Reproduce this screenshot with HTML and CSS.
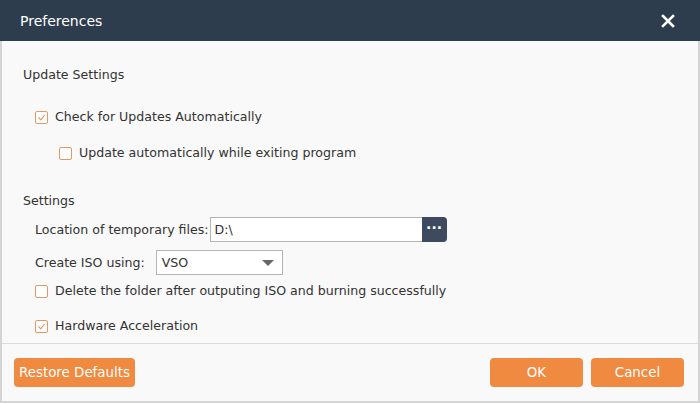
FILE: index.html
```html
<!DOCTYPE html>
<html lang="en">
<head>
<meta charset="UTF-8">
<title>Preferences</title>
<link rel="stylesheet" href="styles.css">
</head>
<body>
<div class="dialog">
    <div class="titlebar">
        <span class="title">Preferences</span>
        <span class="close">
            <svg width="14" height="14" viewBox="0 0 14 14"><path d="M2 2L12 12M12 2L2 12" stroke="#fff" stroke-width="2.6" stroke-linecap="square"/></svg>
        </span>
    </div>
    <div class="content">
        <div class="section-title">Update Settings</div>
        <label class="check row-auto">
            <span class="box checked"><svg width="11" height="11" viewBox="0 0 11 11"><path d="M2.5 5.5L4.8 7.8L8.6 3" fill="none" stroke="#e8955a" stroke-width="1.1"/></svg></span>
            Check for Updates Automatically
        </label>
        <label class="check row-exit">
            <span class="box"></span>
            Update automatically while exiting program
        </label>

        <div class="section-title second">Settings</div>
        <div class="field row-location">
            <span class="label">Location of temporary files:</span>
            <div class="path-input">
                <span class="path-text">D:\</span>
                <span class="browse">···</span>
            </div>
        </div>
        <div class="field row-iso">
            <span class="label">Create ISO using:</span>
            <div class="select">
                <span>VSO</span>
                <svg width="12" height="6" viewBox="0 0 12 6"><path d="M0 0H12L6 6Z" fill="#666"/></svg>
            </div>
        </div>
        <label class="check row-delete">
            <span class="box"></span>
            Delete the folder after outputing ISO and burning successfully
        </label>
        <label class="check row-hw">
            <span class="box checked"><svg width="11" height="11" viewBox="0 0 11 11"><path d="M2.5 5.5L4.8 7.8L8.6 3" fill="none" stroke="#e8955a" stroke-width="1.1"/></svg></span>
            Hardware Acceleration
        </label>
    </div>
    <div class="footer">
        <button class="btn restore">Restore Defaults</button>
        <div class="right-buttons">
            <button class="btn ok">OK</button>
            <button class="btn cancel">Cancel</button>
        </div>
    </div>
</div>
</body>
</html>
```

FILE: styles.css
```css
body {
    margin: 0;
    padding: 0;
    font-family: "DejaVu Sans", Verdana, sans-serif;
    font-size: 12.6px;
    color: #333;
    background-color: #f9f9f9;
}
.dialog {
    width: 700px;
    height: 403px;
    display: flex;
    flex-direction: column;
    box-sizing: border-box;
    border-left: 2px solid #d4d4d4;
    border-right: 2px solid #d4d4d4;
    border-bottom: 2px solid #d4d4d4;
    background-color: #f9f9f9;
}
.titlebar {
    height: 41px;
    margin: 0 -2px;
    background-color: #2e3d4d;
    display: flex;
    align-items: center;
    justify-content: space-between;
    padding: 0 25px 0 20px;
    flex-shrink: 0;
}
.title {
    color: #fff;
    font-size: 14px;
}
.close {
    display: flex;
}
.content {
    flex: 1;
    padding: 26px 0 0 21px;
    border-bottom: 1px solid #dcdcdc;
}
.section-title {
    line-height: 16px;
}
.section-title.second {
    margin-top: 32px;
}
.check {
    display: flex;
    align-items: center;
    line-height: 16px;
    padding-left: 12px;
}
.box {
    width: 11px;
    height: 11px;
    border: 1px solid #e09a68;
    border-radius: 2px;
    background-color: #fff;
    margin-right: 7px;
    display: flex;
}
.row-auto {
    margin-top: 26px;
}
.row-exit {
    margin-top: 20px;
    padding-left: 36px;
}
.field {
    display: flex;
    align-items: center;
    padding-left: 12px;
}
.row-location {
    margin-top: 8px;
}
.row-iso {
    margin-top: 8px;
}
.label {
    margin-right: 1px;
}
.path-input {
    display: flex;
    width: 237px;
    height: 25px;
    box-sizing: border-box;
    border: 1px solid #b5b5b5;
    border-right: none;
    background-color: #fff;
    border-radius: 0 4px 4px 0;
}
.path-text {
    flex: 1;
    padding-left: 4px;
    line-height: 23px;
}
.browse {
    width: 25px;
    height: 25px;
    margin-top: -1px;
    background-color: #3d4a60;
    color: #fff;
    border-radius: 0 4px 4px 0;
    text-align: center;
    line-height: 23px;
    font-weight: bold;
    font-size: 14px;
}
.select {
    width: 127px;
    height: 25px;
    box-sizing: border-box;
    border: 1px solid #b5b5b5;
    background-color: #fff;
    margin-left: 10px;
    display: flex;
    align-items: center;
    justify-content: space-between;
    padding: 0 8px 0 5px;
}
.row-delete {
    margin-top: 8px;
}
.row-hw {
    margin-top: 19px;
}
.footer {
    height: 57px;
    flex-shrink: 0;
    display: flex;
    align-items: center;
    justify-content: space-between;
    padding: 0 14px 0 12px;
}
.right-buttons {
    display: flex;
    gap: 8px;
}
.btn {
    height: 29px;
    background-color: #f08a40;
    color: #fff;
    border: none;
    border-radius: 4px;
    font-family: "DejaVu Sans", Verdana, sans-serif;
    font-size: 13.4px;
    padding: 0;
    cursor: pointer;
}
.restore {
    width: 121px;
}
.ok, .cancel {
    width: 93px;
}
```
